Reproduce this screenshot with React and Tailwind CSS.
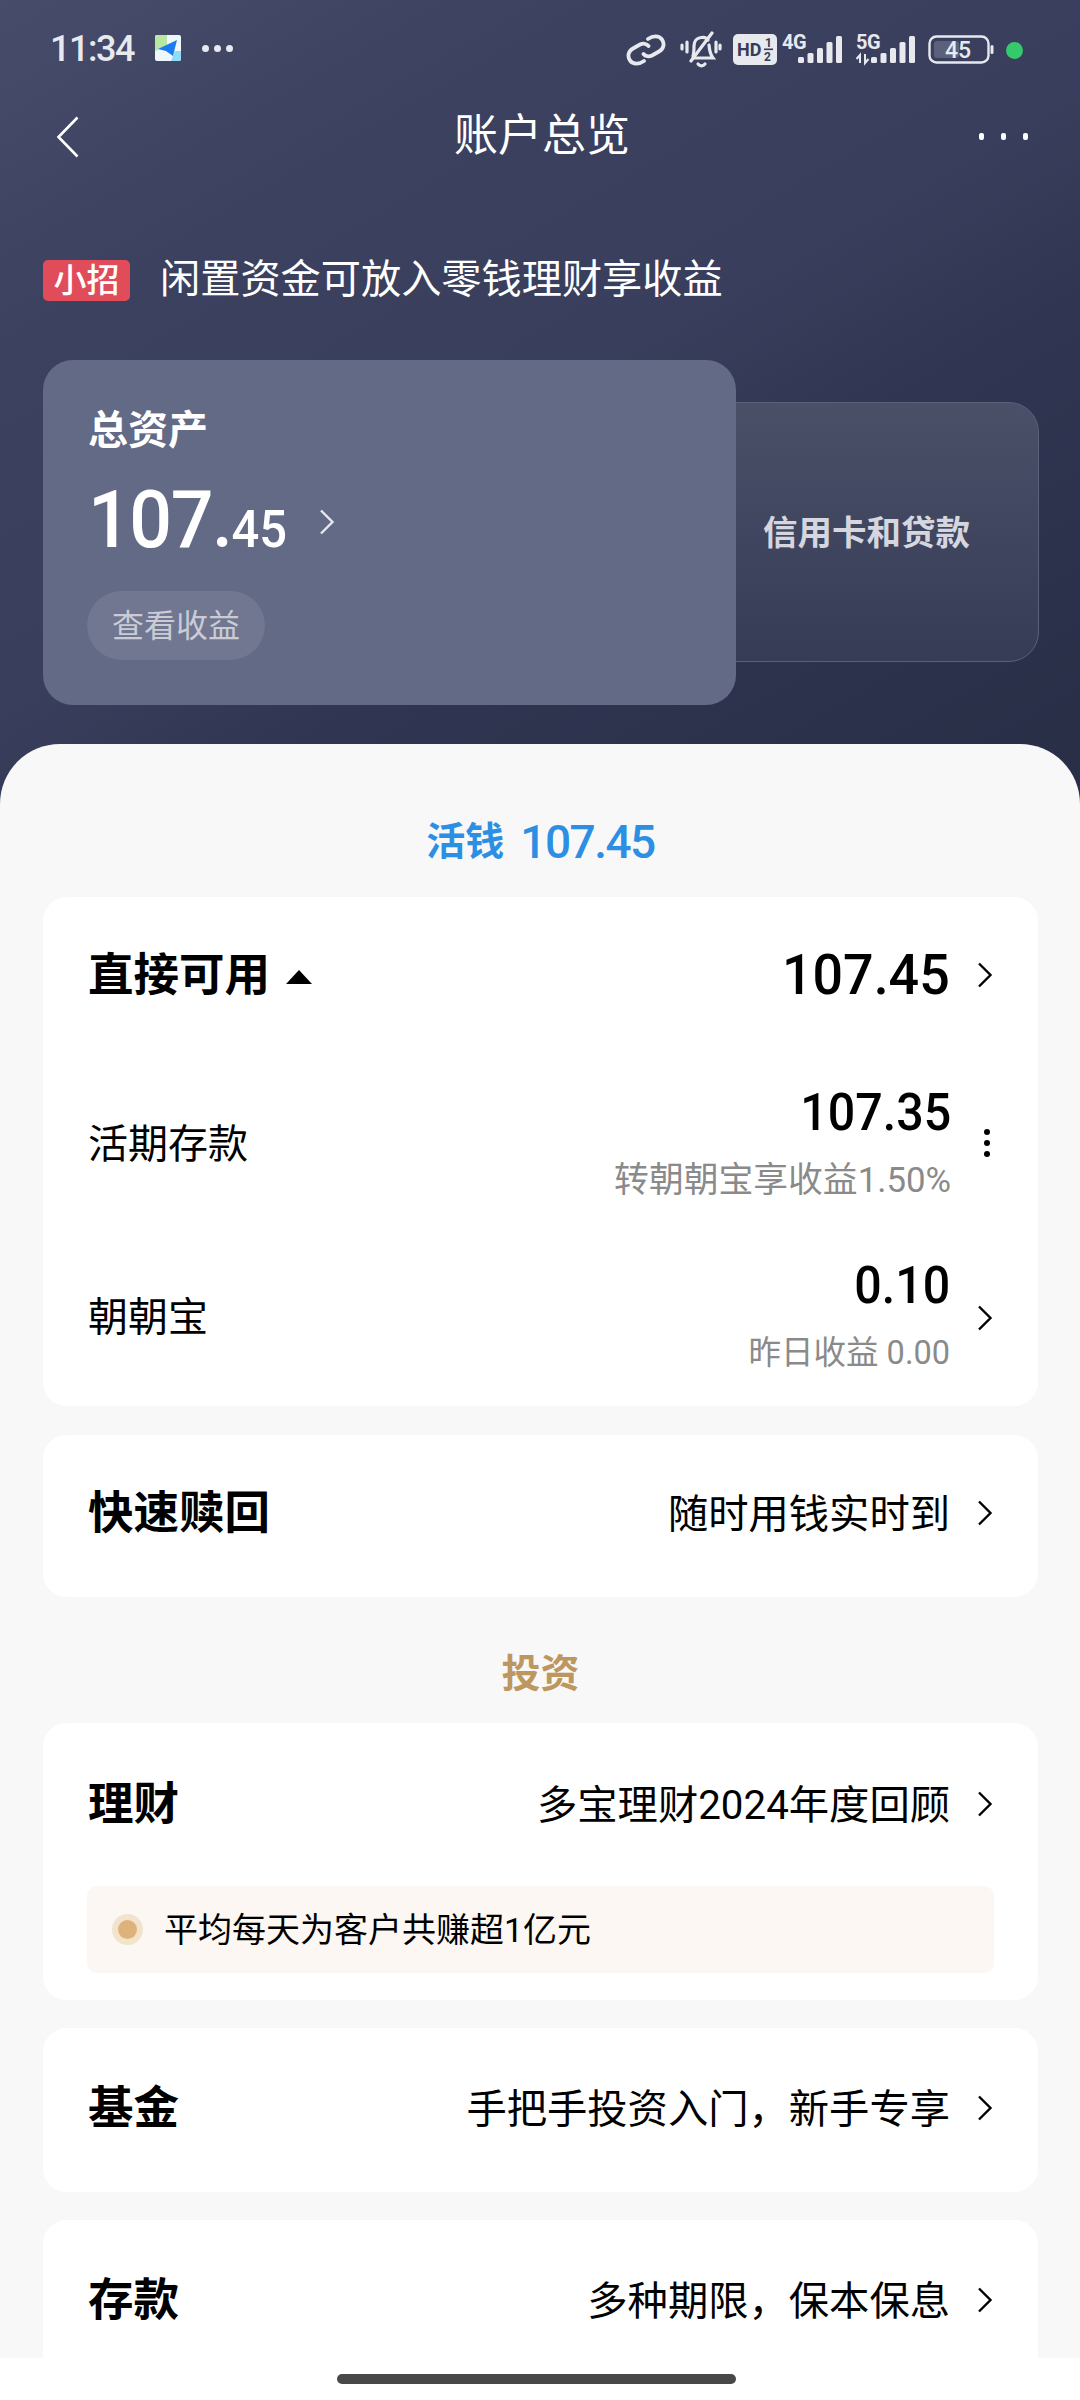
const Chevron = ({ className = "text-black" }) => (
  <svg width="16" height="26" viewBox="0 0 16 26" fill="none" className={`shrink-0 ${className}`}>
    <path d="M2 1.5 L13.5 13 L2 24.5" stroke="currentColor" strokeWidth="2.4" />
  </svg>
);

const StatusLink = () => (
  <svg width="40" height="34" viewBox="0 0 40 34" fill="none" stroke="#e8e9ee" strokeWidth="3.8" strokeLinecap="round">
    <path d="M22 6 C27 2.5 33 2.5 36 6.5 C39 11 37.5 16 33 18.5 L26 22.5 C23 24 19.5 23.5 17.5 21" />
    <path d="M18 28 C13 31.5 7 31.5 4 27.5 C1 23 2.5 18 7 15.5 L14 11.5 C17 10 20.5 10.5 22.5 13" />
  </svg>
);

const StatusBell = () => (
  <svg width="42" height="38" viewBox="0 0 42 38" fill="none" stroke="#e8e9ee" strokeWidth="3.2" strokeLinecap="round">
    <path d="M13 25 C14 22 14 19 14 15 C14 10 17 7 21 6.5 C24 6 27 7 28 9" />
    <path d="M29 14 C29.5 20 30 23 33 27 L13 27" />
    <path d="M32 2 L11 30" />
    <path d="M18 33 C20 35.5 23 35.5 25 33" />
    <path d="M7 11 L7 21 M2 14 L2 18 M36 11 L36 21 M40 14 L40 18" />
  </svg>
);

const StatusHD = () => (
  <svg width="44" height="32" viewBox="0 0 44 32">
    <rect width="44" height="31" rx="5" fill="#e8e9ee" />
    <text x="4" y="22" fontFamily="Roboto" fontWeight="700" fontSize="18" fill="#363c56">HD</text>
    <text x="32" y="13" fontFamily="Roboto" fontWeight="700" fontSize="12" fill="#363c56">1</text>
    <rect x="31" y="14.5" width="9" height="1.6" fill="#363c56" />
    <text x="31" y="27" fontFamily="Roboto" fontWeight="700" fontSize="12" fill="#363c56">2</text>
  </svg>
);

const Bars = ({ x }) => (
  <g fill="#e8e9ee">
    <rect x={x} y="28" width="6" height="6" rx="1.5" />
    <rect x={x + 9.5} y="24" width="6" height="10" rx="1.5" />
    <rect x={x + 19} y="19" width="6" height="15" rx="1.5" />
    <rect x={x + 28.5} y="13" width="6" height="21" rx="1.5" />
    <rect x={x + 38} y="7" width="6" height="27" rx="1.5" />
  </g>
);

const Status4G = () => (
  <svg width="60" height="42" viewBox="0 0 60 42">
    <text x="0" y="20" fontFamily="Roboto" fontWeight="700" fontSize="20" fill="#e8e9ee" letterSpacing="-0.5">4G</text>
    <Bars x={16} />
  </svg>
);

const Status5G = () => (
  <svg width="60" height="42" viewBox="0 0 60 42">
    <text x="1" y="20" fontFamily="Roboto" fontWeight="700" fontSize="20" fill="#e8e9ee" letterSpacing="-0.5">5G</text>
    <path d="M5 26 V34 M1.5 30 L5 26 L5 34 M10 25 V34 L13.5 30" stroke="#e8e9ee" strokeWidth="2" fill="none" />
    <Bars x={16} />
  </svg>
);

const StatusBattery = () => (
  <svg width="66" height="30" viewBox="0 0 66 30">
    <rect x="1.5" y="1.5" width="59" height="26" rx="7" fill="none" stroke="#e8e9ee" strokeWidth="2.4" />
    <rect x="6" y="6" width="25" height="17" rx="3" fill="#5b6178" />
    <rect x="62.5" y="10" width="3" height="9" rx="1.5" fill="#e8e9ee" />
    <text x="17" y="23" fontFamily="Roboto" fontWeight="500" fontSize="23" fill="#e8e9ee">45</text>
  </svg>
);

const AppIcon = () => (
  <svg width="26" height="26" viewBox="0 0 26 26" className="shrink-0">
    <rect width="26" height="26" rx="2" fill="#eef7fc" />
    <path d="M0 2 a2 2 0 0 1 2-2 H12 V11 L0 16 Z" fill="#b9e6a0" />
    <path d="M20 16 H26 V24 a2 2 0 0 1-2 2 H16 Z" fill="#8fdcf7" />
    <path d="M22 5 L3 14 L11 16 L18 21 Z" fill="#1a7cf0" />
  </svg>
);

const Row = ({ title, note }) => (
  <div className="h-[60px] flex items-center justify-between">
    <span className="text-[45.5px] leading-[60px] font-bold text-black mb-[2px]">{title}</span>
    <div className="flex items-center gap-[27px]">
      <span className="text-[40.3px] leading-[60px] text-black">{note}</span>
      <div className="mb-[4px]"><Chevron /></div>
    </div>
  </div>
);

const Num = ({ children, className = "" }) => (
  <span className={`font-medium text-black origin-right ${className}`}>{children}</span>
);

export default function App() {
  return (
    <div className="w-[1080px] h-[2400px] overflow-hidden flex flex-col font-['Roboto','Noto_Sans_CJK_SC',sans-serif] bg-[linear-gradient(150deg,#464c6a_0px,#3b415e_300px,#383e5b_620px,#2f3550_830px,#2a2f48_1180px)]">
      <div className="h-[96px] shrink-0 flex items-center pl-[50px] pr-[57px] text-[#e8e9ee]">
        <span className="text-[36px] leading-none font-medium tracking-[-1.5px] w-[105px] mt-[2px]">11:34</span>
        <AppIcon />
        <div className="flex gap-[5px] ml-[21px]">
          <span className="w-[7px] h-[7px] rounded-full bg-[#e8e9ee]" />
          <span className="w-[7px] h-[7px] rounded-full bg-[#e8e9ee]" />
          <span className="w-[7px] h-[7px] rounded-full bg-[#e8e9ee]" />
        </div>
        <div className="ml-auto flex items-center mt-[4px]">
          <StatusLink />
          <div className="ml-[14px]"><StatusBell /></div>
          <div className="ml-[11px]"><StatusHD /></div>
          <div className="ml-[5px]"><Status4G /></div>
          <div className="ml-[13px]"><Status5G /></div>
          <div className="ml-[13px]"><StatusBattery /></div>
          <span className="ml-[12px] w-[17px] h-[17px] rounded-full bg-[#34c96b]" />
        </div>
      </div>

      <div className="h-[80px] shrink-0 grid grid-cols-[1fr_auto_1fr] items-center pl-[56px] pr-[52px]">
        <svg width="23" height="42" viewBox="0 0 23 42" fill="none" className="mt-[2px]">
          <path d="M21.5 1.5 L2.5 21 L21.5 40.5" stroke="#fff" strokeWidth="2.6" />
        </svg>
        <span className="text-[44px] leading-[60px] text-white">账户总览</span>
        <div className="flex justify-end gap-[17px]">
          <span className="w-[5px] h-[7px] rounded-[2px] bg-white" />
          <span className="w-[5px] h-[7px] rounded-[2px] bg-white" />
          <span className="w-[5px] h-[7px] rounded-[2px] bg-white" />
        </div>
      </div>

      <div className="mt-[84px] h-[40px] shrink-0 flex items-center pl-[43px]">
        <span className="w-[87px] h-[41px] rounded-[5px] bg-[#e14c5a] text-white text-[33px] leading-[41px] text-center font-medium">小招</span>
        <span className="ml-[30px] text-[40.2px] leading-[48px] text-white">闲置资金可放入零钱理财享收益</span>
      </div>

      <div className="mt-[60px] shrink-0 flex items-start pl-[43px]">
        <div className="relative z-10 w-[693px] h-[345px] rounded-[30px] bg-[#636a86] pl-[45px] pt-[51px]">
          <div className="text-[40px] leading-[40px] font-bold text-white">总资产</div>
          <div className="mt-[29px] flex items-baseline h-[80px] text-white font-medium leading-[80px]">
            <div className="flex items-baseline origin-left scale-x-[0.94]">
              <span className="text-[80px] tracking-[-1.5px]">107.</span>
              <span className="text-[52px]">45</span>
            </div>
            <div className="ml-[19px] self-center mt-[4px]"><Chevron className="text-[#e8e9ee]" /></div>
          </div>
          <div className="-ml-[1px] mt-[31px] w-[178px] h-[69px] rounded-full bg-[#717790] text-[#c9ccd6] text-[32px] leading-[71px] text-center">查看收益</div>
        </div>
        <div className="-ml-[30px] mt-[42px] w-[333px] h-[260px] rounded-[30px] border border-[#5a6079] bg-[linear-gradient(180deg,#4b5069,#363c56)] flex items-center pl-[56px]">
          <span className="text-[34.5px] leading-[44px] font-bold text-[#d5d6df] mt-[2px]">信用卡和贷款</span>
        </div>
      </div>

      <div className="mt-[39px] flex-1 min-h-0 overflow-hidden rounded-t-[60px] bg-[#f8f8f8] pl-[43px] pr-[42px] pt-[68px]">
        <div className="h-[60px] mb-[25px] flex items-center justify-center gap-[16px] text-[#2d8fe3] text-[39px] font-bold">
          <span>活钱</span>
          <span className="text-[46px] font-medium tracking-[-1.5px]">107.45</span>
        </div>

        <div className="h-[509px] rounded-[24px] bg-white px-[45px] pt-[50px]">
          <div className="h-[60px] flex items-center justify-between">
            <div className="flex items-center">
              <span className="text-[45.5px] leading-[60px] font-bold text-black mb-[2px]">直接可用</span>
              <svg width="28" height="16" viewBox="0 0 28 16" className="ml-[15px]"><path d="M14 1 L27 15 H1 Z" fill="#000" /></svg>
            </div>
            <div className="flex items-center gap-[27px] mb-[4px]">
              <Num className="text-[56px] leading-[60px] scale-x-[0.96]">107.45</Num>
              <Chevron />
            </div>
          </div>

          <div className="mt-[76px] flex items-center justify-between">
            <span className="text-[40px] leading-[60px] text-black mt-[6px]">活期存款</span>
            <div className="flex items-center gap-[33px]">
              <div className="flex flex-col items-end">
                <Num className="text-[52px] leading-[60px] scale-x-[0.93]">107.35</Num>
                <span className="mt-[17px] text-[34.8px] leading-[40px] text-[#8a8a8a]">转朝朝宝享收益1.50%</span>
              </div>
              <div className="flex flex-col gap-[5px] mr-[3px] mt-[2px]">
                <span className="w-[6px] h-[6px] rounded-full bg-black" />
                <span className="w-[6px] h-[6px] rounded-full bg-black" />
                <span className="w-[6px] h-[6px] rounded-full bg-black" />
              </div>
            </div>
          </div>

          <div className="mt-[56px] flex items-center justify-between">
            <span className="text-[40px] leading-[60px] text-black mt-[6px]">朝朝宝</span>
            <div className="flex items-center gap-[27px]">
              <div className="flex flex-col items-end">
                <Num className="text-[52px] leading-[60px] scale-x-[0.93]">0.10</Num>
                <span className="mt-[17px] text-[32.5px] leading-[40px] text-[#8a8a8a]">昨日收益 0.00</span>
              </div>
              <div className="mt-[6px]"><Chevron /></div>
            </div>
          </div>
        </div>

        <div className="mt-[29px] h-[162px] rounded-[24px] bg-white px-[45px] pt-[50px]">
          <Row title="快速赎回" note="随时用钱实时到" />
        </div>

        <div className="mt-[47px] mb-[19px] h-[60px] flex items-center justify-center text-[39px] font-bold text-[#bd9660]">投资</div>

        <div className="h-[277px] rounded-[24px] bg-white pt-[53px]">
          <div className="px-[45px]">
            <Row title="理财" note="多宝理财2024年度回顾" />
          </div>
          <div className="mt-[50px] mx-[44px] h-[87px] rounded-[10px] bg-[#fcf7f2] flex items-center pl-[25px]">
            <span className="w-[31px] h-[31px] rounded-full bg-[#f2e3cd] flex items-center justify-center">
              <span className="w-[19px] h-[19px] rounded-full bg-[#deb37b]" />
            </span>
            <span className="ml-[21px] text-[34px] leading-[44px] text-black">平均每天为客户共赚超1亿元</span>
          </div>
        </div>

        <div className="mt-[28px] h-[164px] rounded-[24px] bg-white px-[45px] pt-[52px]">
          <Row title="基金" note="手把手投资入门，新手专享" />
        </div>

        <div className="mt-[28px] h-[164px] rounded-[24px] bg-white px-[45px] pt-[52px]">
          <Row title="存款" note="多种期限，保本保息" />
        </div>
      </div>

      <div className="h-[42px] shrink-0 bg-white pt-[16px] pl-[337px]">
        <div className="w-[399px] h-[10px] rounded-full bg-[#484848]" />
      </div>
    </div>
  );
}
